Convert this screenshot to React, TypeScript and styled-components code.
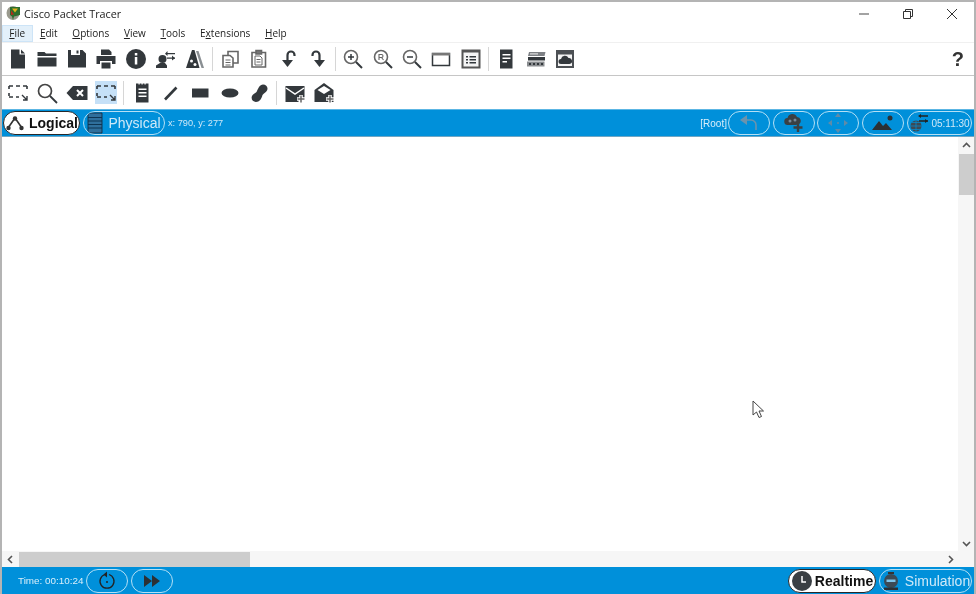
import React from 'react';
import styled, { createGlobalStyle } from 'styled-components';

const Global = createGlobalStyle`
  html, body { margin: 0; padding: 0; background: #fff; overflow: hidden; }
  #root { width: 976px; height: 594px; }
`;

const Win = styled.div`
  width: 976px; height: 594px; box-sizing: border-box;
  border: 2px solid #b4b4b4; border-bottom: 0;
  display: flex; flex-direction: column; background: #fff;
  font-family: "Open Sans", "Noto Sans", sans-serif; filter: blur(0.4px); position: relative;
`;
const TitleBar = styled.div`
  height: 23px; flex: none; display: flex; align-items: center; padding-left: 4px;
`;
const TitleText = styled.span`
  font-size: 10.8px; color: #222; margin-left: 2px; font-family: "Open Sans", sans-serif;
`;
const WinButtons = styled.div`margin-left: auto; display: flex; height: 100%;`;
const WinButton = styled.div`
  width: 44px; height: 100%; display: flex; align-items: center; justify-content: center;
`;
const MenuBar = styled.div`
  height: 17px; flex: none; display: flex; align-items: center; border-bottom: 1px solid #f0f0f0;
`;
const MenuItem = styled.div<{ $active?: boolean }>`
  height: 17px; box-sizing: border-box; padding: 0 6.35px; font-size: 10px; line-height: 15px; color: #222;
  background: ${p => (p.$active ? '#e3f0fa' : 'transparent')};
  border: 1px solid ${p => (p.$active ? '#cde4f7' : 'transparent')};
  u { text-underline-offset: 1px; }
`;
const Toolbar = styled.div<{ $h: number; $line?: boolean }>`
  height: ${p => p.$h}px; flex: none; box-sizing: border-box; display: flex; align-items: center;
  padding-left: 1.3px; border-bottom: ${p => (p.$line ? '1px solid #c6c6c6' : '0')};
`;
const ToolButton = styled.div<{ $active?: boolean }>`
  width: 29.4px; height: 23px; flex: none; display: flex; align-items: center; justify-content: center; position: relative;
  &::before {
    content: ''; position: absolute; left: 3.5px; right: 3.5px; top: 0; bottom: 0; z-index: 0;
    background: ${p => (p.$active ? '#c5e0f7' : 'transparent')};
  }
  svg { position: relative; }
`;
const Sep = styled.div`
  width: 1px; height: 24px; margin: 0 2.5px; background: #d6d6d6; flex: none;
`;
const Help = styled.span`
  margin-left: auto; margin-right: 10px; font: bold 20px "Liberation Sans", sans-serif; color: #333;
`;
const BlueBar = styled.div<{ $h: number }>`
  height: ${p => p.$h}px; flex: none; box-sizing: border-box; background: #0090da;
  display: flex; align-items: center; padding: 0 2px 0 1px;
  color: #d8eefa; font-family: "Liberation Sans", sans-serif;
`;
const TopBlue = styled(BlueBar)`
  border-top: 1px solid #5cb6e4; border-bottom: 1px solid #6fa6c4;
`;
const Pill = styled.div<{ $w: number; $on?: boolean; $ml?: number; $gap?: number; $right?: boolean }>`
  width: ${p => p.$w}px; height: 24px; flex: none; box-sizing: border-box; border-radius: 12px;
  margin-left: ${p => (p.$right ? 'auto' : `${p.$ml ?? 0}px`)}; display: flex; align-items: center; justify-content: center;
  gap: ${p => p.$gap ?? 4}px;
  border: ${p => (p.$on ? '1.5px solid #26282b' : '1px solid #b5e0f5')};
  background: ${p => (p.$on ? '#fff' : 'transparent')};
  color: ${p => (p.$on ? '#111' : '#cfe9f8')};
  font-size: 14px; font-weight: ${p => (p.$on ? 700 : 400)}; white-space: nowrap; overflow: hidden;
`;
const Coords = styled.span`font-size: 9.2px; margin-left: 3px; color: #cfe9f8;`;
const Root = styled.span`font-size: 10px; margin-left: auto;`;
const TimeTx = styled.span`font-size: 9.9px; margin-left: 15px; margin-right: 2.5px;`;
const Clock = styled.span`font-size: 10px; color: #cfe9f8;`;
const Middle = styled.div`flex: 1; display: flex; min-height: 0;`;
const Canvas = styled.div`flex: 1; position: relative; background: #fff;`;
const Cursor = styled.svg`position: absolute; left: 750px; top: 263px;`;
const VScroll = styled.div`
  width: 16px; flex: none; background: #f6f6f6; display: flex; flex-direction: column; align-items: center;
`;
const HScroll = styled.div`
  height: 16px; flex: none; background: #f6f6f6; display: flex; align-items: center;
`;
const ArrowBox = styled.div`
  width: 16px; height: 16px; flex: none; display: flex; align-items: center; justify-content: center;
`;
const VThumb = styled.div`width: 15px; height: 41px; margin-top: 1px; background: #cdcdcd;`;
const VFill = styled.div`flex: 1;`;
const HThumb = styled.div`width: 231px; height: 15px; margin-left: 1px; background: #cdcdcd;`;

const D = '#33383c';
const Ico = ({ children, s = 24 }: { children: React.ReactNode; s?: number }) => (
  <svg width={s} height={s} viewBox="0 0 24 24" fill={D} stroke="none">{children}</svg>
);
const Line = { fill: 'none', stroke: D, strokeWidth: 2 } as const;
const Thin = { fill: 'none', stroke: '#666', strokeWidth: 1.6 } as const;

const icons: Record<string, React.ReactNode> = {
  file: <path d="M5 2.5h8.5v5h5.5v14H5zM15 2.5l4 4h-4z" />,
  folder: <path d="M2.5 5h7l1.500 1.500h10.500v2.500h-19zM2.500 10.500h19v9h-19z" />,
  save: <path d="M3 3h3v5h9V3h2.500L21 6.500V20.500H3zM11.500 3.500h2v3h-2z" />,
  print: <g><path d="M7 2.500h8l2.500 2.500v3h-10.500z" /><path d="M2.500 9h19v8h-3.500v-3h-12v3h-3.500z" /><path d="M7.500 15.500h9v6h-9z" /></g>,
  info: <g><circle cx="12" cy="12" r="10" /><path d="M10.800 6h2.500v2.500h-2.500zM10.800 10h2.500v7.500h-2.500z" fill="#fff" /></g>,
  wizard: <g><circle cx="9.500" cy="12" r="4" /><path d="M3 21v-2.500l4-2.500h5l2 2.500V21zM14 6h8v1.300h-8zM14 10.500h8v1.300h-8z" /><path d="M14.500 4l-2.500 2.700 2.500 2.300zM19 8.500l3 2.700-3 2.300z" /></g>,
  tower: <g><path d="M10 3L4 21h13.500L12.500 3z" /><circle cx="9.500" cy="14" r="1.500" fill="#fff" /><circle cx="13" cy="17.500" r="1.500" fill="#fff" /><path d="M14 4l2.500 0L22 21h-2.500z" fill="#8a8f93" /></g>,
  copy: <g {...Thin}><path d="M10 8V4.500h6l4 0v11.500h-5" /><path d="M5 8.500h7l3 2.500v9H5z" /><path d="M7.500 13h5M7.500 15.500h5M7.500 18h5" strokeWidth={1} /></g>,
  paste: <g {...Thin}><path d="M5 5.500h13.500V20H5z" /><path d="M9 3.500h5.500v3.500H9z" fill="#777" /><path d="M8 9h5l2 2v7H8zM9.500 12.500h4M9.500 15h4" strokeWidth={1} /></g>,
  undo: <g><path d="M10.500 15V8a3.500 3.500 0 0 1 7 0v1" {...Line} strokeWidth={2.2} /><path d="M5 13h11l-5.500 7z" /></g>,
  redo: <g><path d="M13.500 15V8a3.500 3.500 0 0 0-7 0v1" {...Line} strokeWidth={2.2} /><path d="M19 13H8l5.500 7z" /></g>,
  zin: <g><circle cx="10" cy="10" r="6.500" {...Thin} strokeWidth={1.6} /><path d="M15 15l6 6" {...Line} /><path d="M7 10h6M10 7v6" {...Line} strokeWidth={1.5} /></g>,
  zr: <g><circle cx="10" cy="10" r="6.500" {...Thin} strokeWidth={1.6} /><path d="M15 15l6 6" {...Line} /><path d="M8 13V7.500h2.500a1.500 1.500 0 0 1 0 3H8M10.500 10.500l2 2.500" {...Thin} strokeWidth={1.1} /></g>,
  zout: <g><circle cx="10" cy="10" r="6.500" {...Thin} strokeWidth={1.6} /><path d="M15 15l6 6" {...Line} /><path d="M7 10h6" {...Line} strokeWidth={1.5} /></g>,
  win: <g><path d="M3.500 6.500h17v12h-17z" {...Line} strokeWidth={1.5} /><path d="M3 6h18v2.500H3z" fill="#777" /></g>,
  list: <g><path d="M3.500 3.500h17v17h-17z" fill="#f4f4f4" stroke="#555" strokeWidth={2} /><path d="M3 3h18v2.500H3z" fill="#555" /><path d="M7 9h2v1.500H7zM10.500 9H17v1.500h-6.500zM7 12h2v1.500H7zM10.500 12H17v1.500h-6.500zM7 15h2v1.500H7zM10.500 15H17v1.500h-6.500z" /></g>,
  doc: <g><path d="M6 2.500h12.500v19H6z" /><path d="M8.500 7h8v1.500h-8zM8.500 10.500h8V12h-8zM8.500 14h4.500v1.500H8.500z" fill="#fff" /></g>,
  rack: <g><path d="M5 5h16.500l-1 4H4z" fill="#7d8084" /><path d="M6 6.300h8v1.200H6z" fill="#ddd" /><path d="M4 10h17v3.500H4z" /><path d="M3 14.500h17.500v5H3z" fill="#8a8d90" /><path d="M5 16h2v2H5zM9 16h2v2H9zM13 16h2v2h-2zM17 16h2v2h-2z" fill="#33383c" /></g>,
  cloudwin: <g><path d="M3 3h18v18H3z" fill="#4c5054" /><path d="M5 7.500h14V19H5z" fill="#f4f4f4" /><path d="M8 17a2.500 2.500 0 0 1 0-5 4 4 0 0 1 7.500-1 3 3 0 0 1 1 6z" /></g>,
  sel: <g><path d="M3 5h4M10 5h4M17 5h4M3 5v3M21 5v3M3 12v3M3 16h4M10 16h3" {...Line} strokeWidth={1.6} /><path d="M16 14l5 5M21 15v4h-4" {...Line} strokeWidth={1.4} /></g>,
  search: <g><circle cx="10" cy="10" r="6.500" {...Thin} stroke="#444" strokeWidth={1.7} /><path d="M15 15l7 7" {...Line} strokeWidth={1.8} /></g>,
  del: <g><path d="M8 5h14.500v14H8L1.500 12z" /><path d="M12 9l6 6M18 9l-6 6" stroke="#fff" strokeWidth={2} /></g>,
  note: <g><path d="M6 2.500h12.500v19H6z" /><path d="M8.500 2h1.200v1.500H8.500zM11.500 2h1.200v1.500h-1.200zM14.500 2h1.200v1.500h-1.200z" fill="#fff" /><path d="M8.500 7.500h8V9h-8zM8.500 11h8v1.500h-8zM8.500 14.500h8V16h-8z" fill="#fff" /></g>,
  line: <path d="M6 18.500L17.500 6.500" {...Line} strokeWidth={2.6} />,
  rect: <path d="M4 7.500h16.500v9H4z" />,
  oval: <ellipse cx="12" cy="12" rx="8.500" ry="4.500" />,
  free: <path d="M16 3.500c3.500 0 5.500 3 4 6-1 2-3 2.500-4.500 4.500-1 4-3 7-6.500 7-3 0-5-2.500-4.200-5.500.7-2.500 3-3 4.700-4.500 1-2 1.500-3.500 2.500-5 1-1.500 2.500-2.500 4-2.500z" />,
  mail: <g><path d="M2.500 5h19v12h-6v4h-13z" /><path d="M3 7l9 6 9-6" fill="none" stroke="#fff" strokeWidth={1.5} /><path d="M18 14v8M14 18h8" stroke="#fff" strokeWidth={3.500} /><path d="M18 14.500v7M14.500 18h7" stroke="#666" strokeWidth={1.5} /></g>,
  mailo: <g><path d="M12 2l9.500 7v12h-19V9z" /><path d="M5.500 9L12 5l6.500 4L12 13z" fill="#fff" /><path d="M18 14v8M14 18h8" stroke="#fff" strokeWidth={3.500} /><path d="M18 14.500v7M14.500 18h7" stroke="#666" strokeWidth={1.5} /></g>,
};

const row1 = [['file', 'folder', 'save', 'print', 'info', 'wizard', 'tower'], ['copy', 'paste', 'undo', 'redo'], ['zin', 'zr', 'zout', 'win', 'list'], ['doc', 'rack', 'cloudwin']];
const row2 = [['sel', 'search', 'del', 'sel*'], ['note', 'line', 'rect', 'oval', 'free'], ['mail', 'mailo']];

const Groups = ({ rows }: { rows: string[][] }) => (
  <>
    {rows.map((g, i) => (
      <React.Fragment key={i}>
        {i > 0 && <Sep />}
        {g.map((n, j) => {
          const on = n.endsWith('*');
          return (
            <ToolButton key={j} $active={on}>
              <Ico>{icons[n.replace('*', '')]}</Ico>
            </ToolButton>
          );
        })}
      </React.Fragment>
    ))}
  </>
);

const menus: [string, string, string][] = [['', 'F', 'ile'], ['', 'E', 'dit'], ['', 'O', 'ptions'], ['', 'V', 'iew'], ['', 'T', 'ools'], ['E', 'x', 'tensions'], ['', 'H', 'elp']];

const Chevron = ({ d }: { d: string }) => (
  <svg width="9" height="9" viewBox="0 0 9 9"><path d={d} fill="none" stroke="#555" strokeWidth="1.6" /></svg>
);

export default function App() {
  return (
    <>
      <Global />
      <Win>
        <TitleBar>
          <svg width="16" height="17" viewBox="0 0 16 17">
            <ellipse cx="7" cy="8" rx="6.500" ry="7" fill="#9a9a8e" />
            <path d="M4 2h10v8l-6 1.500-1 3.500-1-3.500L4 10z" fill="#2c6e2c" />
            <path d="M6 3.500h6l-3 4z" fill="#e2b21c" />
            <path d="M5 5l3 4.500-3 .5z" fill="#b12a1c" />
          </svg>
          <TitleText>Cisco Packet Tracer</TitleText>
          <WinButtons>
            <WinButton><svg width="12" height="12" viewBox="0 0 12 12"><path d="M1 6h10" stroke="#666" strokeWidth="1.2" /></svg></WinButton>
            <WinButton><svg width="12" height="12" viewBox="0 0 12 12"><path d="M1.500 3.500h7v7h-7zM3.500 3.500v-2h7v7h-2" fill="none" stroke="#333" strokeWidth="1" /></svg></WinButton>
            <WinButton><svg width="12" height="12" viewBox="0 0 12 12"><path d="M1 1l10 10M11 1L1 11" stroke="#333" strokeWidth="1" /></svg></WinButton>
          </WinButtons>
        </TitleBar>
        <MenuBar>
          {menus.map(([a, u, b], i) => (
            <MenuItem key={i} $active={i === 0}>{a}<u>{u}</u>{b}</MenuItem>
          ))}
        </MenuBar>
        <Toolbar $h={33} $line>
          <Groups rows={row1} />
          <Help>?</Help>
        </Toolbar>
        <Toolbar $h={33}>
          <Groups rows={row2} />
        </Toolbar>
        <TopBlue $h={28}>
          <Pill $w={77} $on>
            <svg width="20" height="20" viewBox="0 0 20 20"><path d="M3 15L10 5l7 10" fill="none" stroke="#333" strokeWidth="1.600" /><circle cx="3.500" cy="15" r="2.200" fill="#333" /><circle cx="10" cy="5.500" r="2.200" fill="#333" /><circle cx="16.500" cy="15" r="2.200" fill="#333" /></svg>
            Logical
          </Pill>
          <Pill $w={82} $ml={3} $gap={5}>
            <svg width="16" height="22" viewBox="0 0 16 22"><path d="M1 1h14v20H1z" fill="#2f6f9c" stroke="#123" strokeWidth=".8" /><path d="M1 5.500h14M1 9h14M1 12.500h14M1 16h14" stroke="#0d3553" strokeWidth="1" /></svg>
            Physical
          </Pill>
          <Coords>x: 790, y: 277</Coords>
          <Root>[Root]</Root>
          <Pill $w={42} $ml={1}>
            <svg width="22" height="20" viewBox="0 0 22 20"><path d="M7 7h6a5 5 0 0 1 5 5v5" fill="none" stroke="#6b93ad" strokeWidth="1.600" /><path d="M9 2v10L2 7z" fill="#6b93ad" /></svg>
          </Pill>
          <Pill $w={42} $ml={3}>
            <svg width="24" height="22" viewBox="0 0 24 22"><path d="M6 13a3.500 3.500 0 0 1-.5-7 5 5 0 0 1 9.500-1 3.800 3.800 0 0 1 2 7l-3 1z" fill="#3a4044" /><circle cx="8" cy="9" r="1.500" fill="#789" /><circle cx="13" cy="8" r="1.500" fill="#789" /><path d="M16 11v9M11.500 15.500h9" stroke="#3a4044" strokeWidth="2.400" /></svg>
          </Pill>
          <Pill $w={42} $ml={2}>
            <svg width="22" height="20" viewBox="0 0 22 20" fill="#5f8ba8"><path d="M11 0l3 4H8zM11 20l-3-4h6zM1 10l4-3v6zM21 10l-4 3V7z" /><circle cx="11" cy="10" r="1" /></svg>
          </Pill>
          <Pill $w={42} $ml={3}>
            <svg width="24" height="20" viewBox="0 0 24 20"><path d="M1 17l7-9 4 5 3-3 6 7z" fill="#2b3034" /><circle cx="19" cy="5" r="2.500" fill="#2b3034" /></svg>
          </Pill>
          <Pill $w={65} $ml={3} $gap={2}>
            <svg width="20" height="20" viewBox="0 0 20 20"><circle cx="7" cy="13" r="5.500" fill="#3c4a55" /><path d="M1.500 13h11M7 7.500v11M3 9.500h8M3 16.500h8" stroke="#0090da" strokeWidth=".7" /><path d="M10 3h9M10 8h9" stroke="#222" strokeWidth="1.300" /><path d="M12 1v4l-3-2zM16 6v4l3-2z" fill="#222" /></svg>
            <Clock>05:11:30</Clock>
          </Pill>
        </TopBlue>
        <Middle>
          <Canvas>
            <Cursor width="13" height="19" viewBox="0 0 13 19"><path d="M1 1v14l3.500-3 2.500 5.500 2.500-1L7 11h4.500z" fill="#fff" stroke="#444" strokeWidth="1" /></Cursor>
          </Canvas>
          <VScroll>
            <ArrowBox><Chevron d="M1 6l3.500-3.500L8 6" /></ArrowBox>
            <VThumb />
            <VFill />
            <ArrowBox><Chevron d="M1 3l3.500 3.500L8 3" /></ArrowBox>
          </VScroll>
        </Middle>
        <HScroll>
          <ArrowBox><Chevron d="M6 1L2.500 4.500 6 8" /></ArrowBox>
          <HThumb />
          <VFill />
          <ArrowBox><Chevron d="M3 1l3.500 3.500L3 8" /></ArrowBox>
          <ArrowBox />
        </HScroll>
        <BlueBar $h={27}>
          <TimeTx>Time: 00:10:24</TimeTx>
          <Pill $w={42}>
            <svg width="20" height="20" viewBox="0 0 20 20"><path d="M8 3.500a7 7 0 1 0 4 0" fill="none" stroke="#222" strokeWidth="1.300" /><path d="M10 0.500v6L6.500 3.500z" fill="#222" /><circle cx="10" cy="11" r="1" fill="#222" /></svg>
          </Pill>
          <Pill $w={42} $ml={3}>
            <svg width="18" height="14" viewBox="0 0 18 14" fill="#2b3034"><path d="M1 1l8 6-8 6zM9 1l8 6-8 6z" /></svg>
          </Pill>
          <Pill $w={88} $on $right $gap={2}>
            <svg width="22" height="22" viewBox="0 0 22 22"><circle cx="11" cy="11" r="10" fill="#3a3f44" /><path d="M11 6v6h4" fill="none" stroke="#fff" strokeWidth="1.500" /></svg>
            Realtime
          </Pill>
          <Pill $w={93} $ml={3}>
            <svg width="20" height="22" viewBox="0 0 20 22"><path d="M7 2h6v2H7z" fill="#333" /><circle cx="10" cy="11" r="7" fill="#3c4a55" /><path d="M5.500 9.500h9V12h-9z" fill="#7fc4e8" /><path d="M3 17.500h14V20H3z" fill="#2b3034" /></svg>
            Simulation
          </Pill>
        </BlueBar>
      </Win>
    </>
  );
}
